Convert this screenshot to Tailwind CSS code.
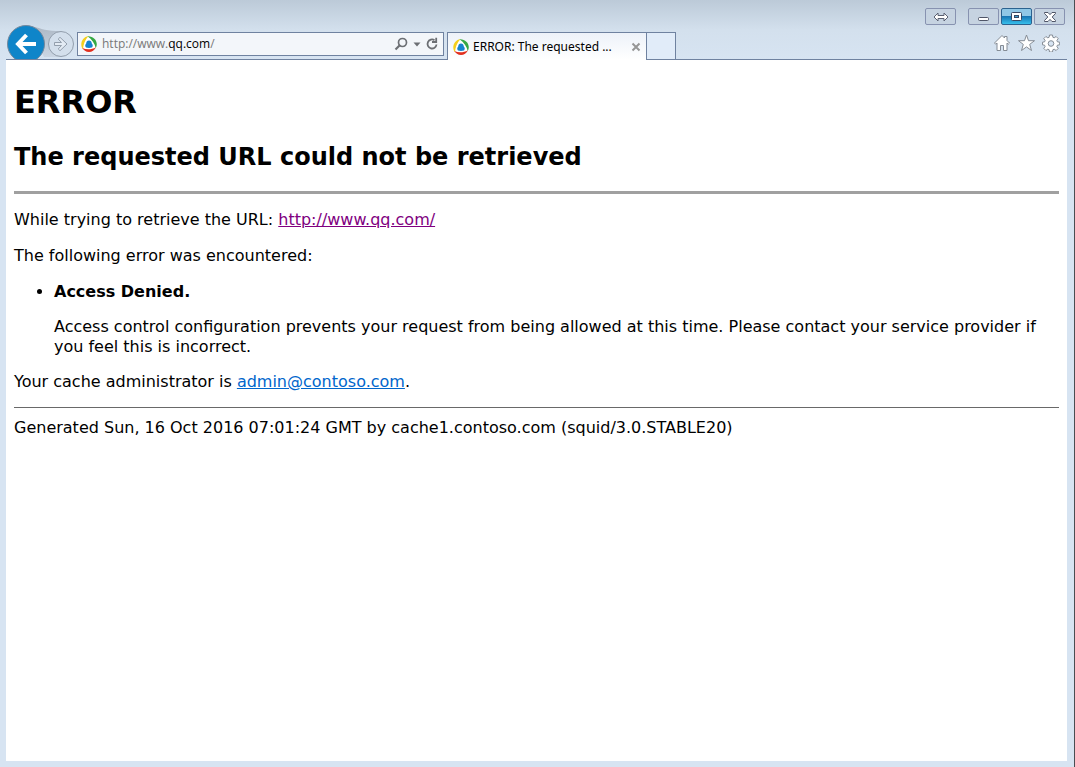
<!DOCTYPE html>
<html lang="en">
<head>
<meta charset="utf-8">
<title>ERROR: The requested URL could not be retrieved</title>
<script src="https://cdn.jsdelivr.net/npm/@tailwindcss/browser@4"></script>
</head>
<body class="min-h-screen flex flex-col bg-[#d7e4f2] border-r border-[#4a4d52] text-black font-['DejaVu_Sans',sans-serif]">
<svg class="hidden">
  <symbol id="site" viewBox="0 0 16 16">
    <circle cx="8" cy="8" r="7" fill="#fff"/>
    <path d="M7.500 0C3 .8.300 4.200.300 8.500c0 2 .7 3.600 1.700 4.700C2.300 8.500 4 4 7.500 0z" fill="#f5cf1b"/>
    <path d="M6.500.300C12 0 15.800 3.800 15.800 8.300c0 1.500-.4 2.700-1.100 3.800C13.800 7.500 11 3.500 6.500.300z" fill="#35a844"/>
    <path d="M1.300 12C5.500 14 10.500 13.800 15 11.200 13.500 14.200 11 15.900 8 15.900c-3 0-5.400-1.500-6.700-3.900z" fill="#e2301f"/>
    <path d="M8 4.600c1.700 0 2.700 1.200 2.800 2.800 1.200 1 1.300 2.800.2 4.100-1.900.6-4.100.6-6 0-1.100-1.300-1-3.100.2-4.100.1-1.600 1.100-2.800 2.800-2.800z" fill="#1583cf"/>
  </symbol>
</svg>
<header class="flex flex-col bg-linear-to-b from-[#bccad8] via-[#d3e0ed] via-50% to-[#d7e4f2]">
  <div class="h-[25px] flex justify-end items-end pr-[9px] gap-[2px]">
    <button aria-label="Switch view" class="w-[31px] h-[17px] mr-[10px] grid place-items-center border border-[#8792b0] rounded-xs bg-[#c6d3e1]">
      <svg width="16" height="10" viewBox="0 0 16 10" fill="#fff" stroke="#5b6172"><path d="M1 5l4-4v2.500h6V1l4 4-4 4V6.500H5V9z"/></svg>
    </button>
    <button aria-label="Minimize" class="w-[31px] h-[17px] grid place-items-center border border-[#8792b0] rounded-xs bg-[#c6d3e1]">
      <svg width="12" height="10" viewBox="0 0 12 10" fill="#fff" stroke="#4f5567"><rect x=".5" y="5.500" width="10" height="3" rx="1"/></svg>
    </button>
    <button aria-label="Restore" class="w-[31px] h-[17px] grid place-items-center border border-[#2c628f] rounded-xs bg-linear-to-b from-[#8fc7e6] from-45% via-[#1877b5] via-50% to-[#38c0ec]">
      <svg width="11" height="9" viewBox="0 0 11 9" fill="none"><rect x=".5" y=".5" width="10" height="8" rx="1" fill="#fff" stroke="#384863"/><rect x="3.500" y="3.500" width="4" height="2" fill="#3c9dce" stroke="#384863"/></svg>
    </button>
    <button aria-label="Close" class="w-[31px] h-[17px] grid place-items-center border border-[#8792b0] rounded-xs bg-[#c6d3e1]">
      <svg width="12" height="10" viewBox="0 0 12 10" fill="#fff" stroke="#4f5567"><path d="M.5.500h3.500L6 2.600 8 .500h3.500v1L8.200 5l3.300 3.500v1H8L6 7.400 4 9.500H.5v-1L3.800 5 .500 1.500z"/></svg>
    </button>
  </div>
  <div class="h-[35px] ml-[6px] mr-[7px] flex border-b border-[#6f82a0]">
    <div class="w-[71px] overflow-hidden">
      <svg width="71" height="38" viewBox="0 0 71 38" fill="none">
        <defs><linearGradient id="wedge" x1="0" y1="0" x2="0" y2="1"><stop offset="0" stop-color="#adb8c5"/><stop offset="1" stop-color="#cbd6e3"/></linearGradient></defs>
        <path d="M23 1c10 1 15 5 27 5h5v26H38z" fill="url(#wedge)"/>
        <a href="#back" aria-label="Back">
          <circle cx="20" cy="19" r="18.500" fill="#0f85c9" stroke="#75899d"/>
          <path d="M20.500 10l-8.500 9 8.500 9M12 19h18" stroke="#fff" stroke-width="4"/>
        </a>
        <a href="#forward" aria-label="Forward">
          <circle cx="55" cy="19" r="12.500" fill="#d3dfec" stroke="#929eac"/>
          <path d="M48.500 17.500h7l-3.300-3.500 1.800-1.700 7 6.700-7 6.700-1.800-1.700 3.300-3.500h-7z" fill="#e3ebf4" stroke="#929eac"/>
        </a>
      </svg>
    </div>
    <form class="w-[367px] h-6 mt-[7px] flex items-center border border-[#6f82a0] bg-[#f3f6fa] pl-[3px] pr-1">
      <svg width="16" height="16"><use href="#site"/></svg>
      <label class="relative flex-1 pl-[5px] font-['Open_Sans',sans-serif] text-xs text-[#787878]">
        <input aria-label="Address" type="text" value="http://www.qq.com/" class="block w-full outline-none text-transparent caret-black">
        <span class="absolute left-[5px] top-0 pointer-events-none">http://www.<span class="text-black">qq.com</span>/</span>
      </label>
      <button type="button" aria-label="Search"><svg width="15" height="14" viewBox="0 0 15 14" fill="none" stroke="#6c6f74"><circle cx="9.500" cy="5.500" r="4" stroke-width="1.700"/><path d="M6.500 8.500L2.500 12.500" stroke-width="2.200"/></svg></button>
      <button type="button" aria-label="Show address list" class="ml-[5px] mr-1"><svg width="8" height="5" viewBox="0 0 8 5" fill="#6c6f74"><path d="M.5.500h7L4 4.500z"/></svg></button>
      <button type="button" aria-label="Refresh"><svg width="14" height="14" viewBox="0 0 14 14" fill="none" stroke="#6c6f74" stroke-width="1.800"><path d="M9.500 3.200A4.500 4.500 0 1 0 11.500 7.500M7 5h4.200V.800"/></svg></button>
    </form>
    <div class="w-[200px] h-[28px] mt-[7px] ml-[3px] -mb-px flex items-center border border-b-0 border-[#6f82a0] bg-linear-to-b from-[#edf2f9] to-white pl-[5px] pr-[5px] text-xs font-['Noto_Sans',sans-serif]">
      <svg width="16" height="16"><use href="#site"/></svg>
      <span class="pl-1 flex-1 whitespace-nowrap">ERROR: The requested ...</span>
      <button aria-label="Close tab"><svg width="10" height="10" viewBox="0 0 10 10" stroke="#969696" stroke-width="2"><path d="M1.500 1.500l7 7m0-7l-7 7"/></svg></button>
    </div>
    <button aria-label="New tab" class="w-[29px] h-[27px] mt-[7px] border border-l-0 border-b-0 border-[#6f82a0] bg-[#e1ecf9]"></button>
    <nav class="ml-auto mt-[9px] mr-[7px] h-[18px] flex gap-[7px]">
      <button aria-label="Home"><svg width="18" height="18" viewBox="0 0 18 18" fill="#fff" stroke="#858c95"><path d="M1.500 9L9 1.500l2.500 2.500V2.500h2.500v4L16.500 9l-1.200 1.200-1.300-1.200v7.500h-3.500v-5h-3v5H4V9l-1.300 1.200z"/></svg></button>
      <button aria-label="Favorites"><svg width="17" height="18" viewBox="0 0 17 18" fill="#fff" stroke="#858c95"><path d="M8.500 1l2 5.700h6l-4.800 3.700 1.800 6.100-5-3.600-5 3.600 1.800-6.100L.5 6.700h6z"/></svg></button>
      <button aria-label="Tools"><svg width="18" height="18" viewBox="0 0 18 18" fill="#fff" stroke="#858c95"><path d="M7.500 1h3l.4 2.300 1.300.5 1.900-1.300 2.100 2.100-1.300 1.900.5 1.300 2.300.400v2.600l-2.300.400-.5 1.300 1.300 1.900-2.100 2.100-1.900-1.300-1.300.5-.4 2.300h-3l-.4-2.300-1.300-.5-1.900 1.300-2.100-2.100 1.300-1.900-.5-1.300L.5 10.800V8.200l2.100-.4.500-1.300-1.300-1.900 2.100-2.100 1.900 1.300 1.300-.5z"/><circle cx="9" cy="9.500" r="2.800" fill="#d7e4f2"/></svg></button>
    </nav>
  </div>
</header>
<main class="flex-1 ml-[6px] mr-[7px] mb-[6px] px-2 bg-white text-base leading-5">
  <h1 class="pt-[22px] text-[32px] leading-10 font-bold">ERROR</h1>
  <h2 class="mt-5 text-2xl leading-[30px] font-bold">The requested URL could not be retrieved</h2>
  <hr class="mt-[19px] border-t-[3px] border-[#a0a0a0]">
  <p class="mt-4">While trying to retrieve the URL: <a href="http://www.qq.com/" class="underline text-[#800080]">http://www.qq.com/</a></p>
  <p class="mt-4">The following error was encountered:</p>
  <ul class="mt-4 pl-10 list-disc">
    <li><strong>Access Denied.</strong>
      <p class="mt-[15px]">Access control configuration prevents your request from being allowed at this time. Please contact your service provider if you feel this is incorrect.</p>
    </li>
  </ul>
  <p class="mt-[15px]">Your cache administrator is <a href="mailto:admin@contoso.com" class="underline text-[#0066cc]">admin@contoso.com</a>.</p>
  <hr class="mt-[15px] border-[#696969]">
  <p class="mt-[10px]">Generated Sun, 16 Oct 2016 07:01:24 GMT by cache1.contoso.com (squid/3.0.STABLE20)</p>
</main>
</body>
</html>
